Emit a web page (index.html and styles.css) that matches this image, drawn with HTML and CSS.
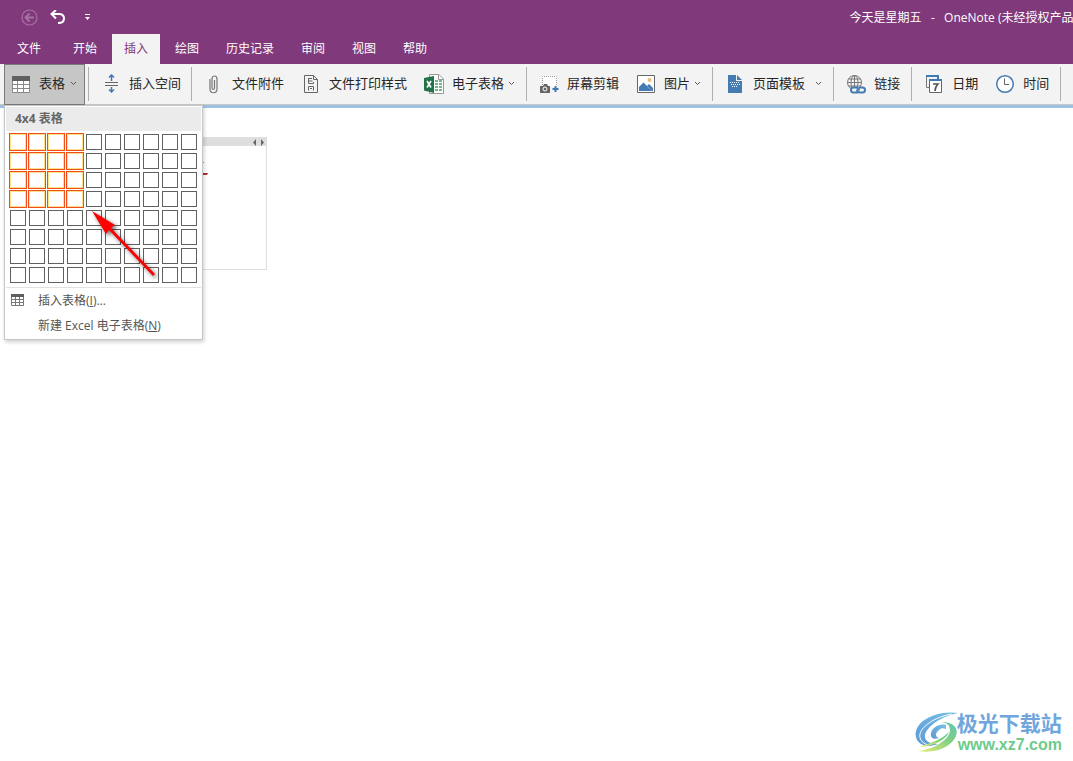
FILE: index.html
```html
<!DOCTYPE html>
<html lang="zh-CN">
<head>
<meta charset="utf-8">
<title>今天是星期五 - OneNote</title>
<link rel="stylesheet" href="styles.css">
</head>
<body>
<header>
  <div class="titlebar">
    <button class="quick" aria-label="后退"><svg width="17" height="17" viewBox="0 0 17 17" fill="none" stroke="#a872a3"><circle cx="8.500" cy="8.500" r="7.500" stroke-width="1.200"/><path d="M13 8.500H5M8.500 4.500l-4 4 4 4" stroke-width="1.800"/></svg></button>
    <button class="quick undo" aria-label="撤消"><svg width="16" height="15" viewBox="0 0 16 15" fill="none" stroke="#fff" stroke-width="2"><path d="M6 0 1.500 4 6 8.500M2 4h7c3 0 5 1.500 5 4.500S12 13 8 13"/></svg></button>
    <button class="quick more" aria-label="自定义快速访问工具栏"><svg width="7" height="7" viewBox="0 0 7 7" fill="#fff"><path d="M1 0h5v1H1zM1 3h5L3.500 6z"/></svg></button>
    <h1 class="title">今天是星期五&nbsp;&nbsp; -&nbsp;&nbsp; OneNote (未经授权产品)</h1>
  </div>
  <nav class="tabs">
    <button class="tab file">文件</button>
    <button class="tab">开始</button>
    <button class="tab active">插入</button>
    <button class="tab">绘图</button>
    <button class="tab">历史记录</button>
    <button class="tab">审阅</button>
    <button class="tab">视图</button>
    <button class="tab">帮助</button>
  </nav>
  <div class="toolbar">
    <button class="tool pressed">
      <svg width="18" height="17" viewBox="0 0 18 17"><path fill="#fff" d="M0 1h18v15H0z"/><path fill="#606060" d="M0 0h18v5H0z"/><path d="M.5 5v11.500h17V5M.5 8.500h17M.5 12.500h17M5.500 5v11M11.500 5v11" fill="none" stroke="#888"/></svg>
      表格
      <svg class="caret" width="7" height="5" viewBox="0 0 7 5"><path d="M1 1l2.500 2.500L6 1" fill="none" stroke="#555"/></svg>
    </button>
    <div class="group first">
      <button class="tool"><svg width="20" height="20" viewBox="0 0 20 20" fill="none"><path d="M4 8.500h13M4 11.500h13" stroke="#666"/><path d="M10.500 7V1M8 3.500 10.500 1 13 3.500M10.500 13v5M8 15.500l2.500 2.500 2.500-2.500" stroke="#3f79b5" stroke-width="1.500"/></svg>插入空间</button>
    </div>
    <div class="group">
      <button class="tool"><svg width="20" height="20" viewBox="0 0 20 20" fill="none" stroke="#777" stroke-width="1.200"><path d="M10.500 6v8c0 2-2.500 2-2.500 0V5c0-4 5-4 5 0v10c0 5-7 5-7 0V5"/></svg>文件附件</button>
      <button class="tool"><svg width="20" height="20" viewBox="0 0 20 20" fill="none" stroke="#666"><path d="M3.500 1.500h9l4 4v13h-13zM12.500 1.500v4h4"/><path d="M7.500 4v5.500h5V8M8 4.500h3M8 7h3.500M7.500 16.500v-4h5v4M9 14.500h2"/></svg>文件打印样式</button>
      <button class="tool"><svg width="20" height="20" viewBox="0 0 20 20"><path d="M5.500.5h9.500l4.500 4.500v14.500h-14z" fill="#fff" stroke="#999"/><path d="M14.500.5v5h5" fill="none" stroke="#999"/><path d="M11 6h3v2h-3zM15 6h3v2h-3zM11 9h3v2h-3zM15 9h3v2h-3zM11 12h3v2h-3zM15 12h3v2h-3zM11 15h3v2h-3zM15 15h3v2h-3z" fill="#75b38c"/><path d="M0 4l10-2v17L0 16.500z" fill="#1f7346"/><path d="M3 7l4 6.500M7 7l-4 6.500" stroke="#fff" stroke-width="1.600"/></svg>电子表格<svg class="caret" width="7" height="5" viewBox="0 0 7 5"><path d="M1 1l2.500 2.500L6 1" fill="none" stroke="#555"/></svg></button>
    </div>
    <div class="group">
      <button class="tool"><svg width="20" height="20" viewBox="0 0 20 20"><path d="M3 2h15v11H3z" fill="#fff"/><path d="M3.500 11V2.500h14V12" fill="none" stroke="#999" stroke-dasharray="1 1"/><path d="M1 12h3l1-2h3l1 2h2v7H1z" fill="#666"/><circle cx="6" cy="15" r="2" fill="#666" stroke="#fff"/><path d="M16.500 12v6M13.500 15h6" stroke="#3f79b5" stroke-width="2"/></svg>屏幕剪辑</button>
      <button class="tool"><svg width="20" height="20" viewBox="0 0 20 20"><path d="M1.500 1.500h17v17h-17z" fill="#fff" stroke="#666"/><circle cx="13.500" cy="6" r="2" fill="#eebc73"/><path d="M3 17v-4l4.500-4.500L16 17z" fill="#447bb3"/><path d="M11 12l2-2 4 4v3h-1z" fill="#447bb3"/></svg>图片<svg class="caret" width="7" height="5" viewBox="0 0 7 5"><path d="M1 1l2.500 2.500L6 1" fill="none" stroke="#555"/></svg></button>
    </div>
    <div class="group">
      <button class="tool"><svg width="20" height="20" viewBox="0 0 20 20"><path d="M3 1h8v6h6v12H3z" fill="#447bb3"/><path d="M12 1l5 5h-5z" fill="#447bb3"/><path d="M5 8.500h10M6 10.500h10M7 12.500h6" stroke="#fff" stroke-dasharray="1 1"/></svg>页面模板<svg class="caret wide" width="7" height="5" viewBox="0 0 7 5"><path d="M1 1l2.500 2.500L6 1" fill="none" stroke="#555"/></svg></button>
    </div>
    <div class="group">
      <button class="tool"><svg width="20" height="20" viewBox="0 0 20 20" fill="none"><g stroke="#777"><circle cx="8.500" cy="8.500" r="7"/><ellipse cx="8.500" cy="8.500" rx="3.500" ry="7"/><path d="M8.500 1.500v14M2.500 5h12M1.500 8.500h14M2.500 12h12"/></g><path d="M6 13h12v6H6z" fill="#f3f3f3"/><g stroke="#447bb3" stroke-width="2"><path d="M12 18.500H7.500a2.500 2.500 0 0 1 0-5H10q3 0 3 3"/><path d="M13 13.500h3.500a2.500 2.500 0 0 1 0 5H14q-3 0-3-3"/></g></svg>链接</button>
    </div>
    <div class="group">
      <button class="tool"><svg width="20" height="20" viewBox="0 0 20 20" fill="none"><path d="M5 13.500H2.500V3" stroke="#777"/><path d="M2 2h12v3" stroke="#3f79b5" stroke-width="2"/><path d="M5.500 6.500h12v12h-12z" stroke="#666" fill="#fff"/><path d="M5 6h13" stroke="#3f79b5" stroke-width="2"/><path d="M9 10h5q-3 3-3 7" stroke="#555" stroke-width="1.600"/></svg>日期</button>
      <button class="tool"><svg width="20" height="20" viewBox="0 0 20 20" fill="none"><circle cx="10" cy="10" r="8.300" fill="#fff" stroke="#447bb3" stroke-width="1.500"/><path d="M9.500 4.500v6h4.500" stroke="#666"/></svg>时间</button>
    </div>
  </div>
</header>
<main>
  <section class="note">
    <div class="note-bar"><svg width="11" height="7" viewBox="0 0 11 7" fill="#666"><path d="M3 0v7L0 3.500zM8 0v7l3-3.500z"/></svg></div>
    <svg class="ink" width="20" height="20" viewBox="0 0 20 20"><path d="M11 16h6l-1 2h-5z" fill="#a5302c"/><path d="M12 5h1v1h-1z" fill="#8a8ad0"/></svg>
  </section>
  <section class="popup">
    <h2 class="popup-title">4x4 表格</h2>
    <div class="cells" id="cells"></div>
    <button class="item"><svg width="13" height="12" viewBox="0 0 13 12"><path d="M.5.500h12v11H.5zM1 5.500h11M1 8.500h11M4.500 3v8M8.500 3v8" fill="none" stroke="#777"/><path d="M0 0h13v3H0z" fill="#606060"/></svg><span>插入表格(<u>I</u>)...</span></button>
    <button class="item"><svg width="13" height="12"></svg><span>新建 Excel 电子表格(<u>N</u>)</span></button>
  </section>
  <svg class="arrow" width="80" height="84" viewBox="0 0 80 84"><path d="M6 6 29 20l-4 3 44 46-2 2-44-46-3 4z" fill="#f00"/></svg>
</main>
<footer class="brand">
  <svg width="46" height="42" viewBox="2 4 46 42">
    <defs>
      <linearGradient id="sky" x1="0" y1="1" x2="1" y2="0"><stop offset="0" stop-color="#5f9bd6"/><stop offset="1" stop-color="#74bfe6"/></linearGradient>
      <linearGradient id="leaf" x1="0" y1="1" x2="1" y2="0"><stop offset="0" stop-color="#e9ea70"/><stop offset=".6" stop-color="#80cf85"/><stop offset="1" stop-color="#62c5b5"/></linearGradient>
    </defs>
    <path fill="url(#sky)" d="M46 5C34 3 20 6 11 13 2 20 1 31 9 36c5 3 12 2 17 0-8 0-14-3-13-9C15 18 30 8 46 5z"/>
    <path fill="none" stroke="#fff" d="M40 6C26 8 10 17 8 26c-1 5 2 9 8 11"/>
    <path fill="url(#sky)" d="M34 17c-7-2-14 3-15 8-1 5 3 7 8 5-4-1-4-5 0-8 2-2 4-2 7-1z"/>
    <path fill="url(#leaf)" d="M30 14c8 1 10 8 6 14-6 8-18 14-30 15 19 3 34-5 38-15 3-8-3-14-14-14z"/>
    <path fill="url(#leaf)" d="M37 24c-3 8-15 14-29 15 10-4 21-7 29-15z"/>
  </svg>
  <div class="brand-text"><strong>极光下载站</strong><span>www.xz7.com</span></div>
</footer>
<script src="cells.js"></script>
</body>
</html>
```
FILE: styles.css
```css
* { box-sizing: border-box; }
body {
  margin: 0;
  min-height: 100vh;
  position: relative;
  overflow: hidden;
  background: #fff;
  font-family: "Open Sans", "Noto Sans CJK SC", sans-serif;
  font-size: 12px;
}
button {
  border: 0;
  padding: 0;
  background: none;
  font: inherit;
  color: inherit;
  white-space: nowrap;
}
svg { display: block; flex: none; }
.titlebar {
  display: flex;
  align-items: center;
  height: 34px;
  padding-left: 21px;
  background: #80397b;
  color: #fff;
}
.undo { margin-left: 12px; }
.more { margin-left: 18px; }
.title {
  margin: 0 -4px 0 auto;
  font-size: 12px;
  font-weight: 400;
  white-space: nowrap;
}
.tabs {
  display: flex;
  gap: 3px;
  height: 30px;
  padding-left: 5px;
  background: #80397b;
  color: #fff;
}
.tab { padding: 0 12px 2px; }
.file { margin-right: 5px; }
.active { background: #f3f3f3; color: #80397b; }
.toolbar {
  display: flex;
  height: 44px;
  padding-left: 4px;
  background: #f3f3f3;
  border-bottom: 3px solid #9cc1e4;
  box-shadow: inset 0 -1px #c9c9c9;
  color: #262626;
  font-size: 13px;
}
.tool { display: flex; align-items: center; gap: 8px; padding-bottom: 4px; }
.tool svg { margin-top: 4px; }
.tool .caret { margin: 2px 0 0 -4px; }
.tool .wide { margin-left: 2px; }
.pressed {
  gap: 9px;
  padding: 0 7px 4px;
  border: 1px solid #7a7a7a;
  background: #c6c6c6;
}
.group {
  display: flex;
  gap: 17px;
  height: 34px;
  margin-top: 3px;
  padding: 0 11px 0 12px;
  border-right: 1px solid #b0b0b0;
}
.first { margin-left: 3px; padding-right: 10px; border-left: 1px solid #b0b0b0; }
main { position: relative; padding: 29px 0 0 20px; }
.note {
  width: 247px;
  height: 133px;
  border: 1px solid #dedede;
}
.note-bar {
  display: flex;
  align-items: center;
  justify-content: flex-end;
  height: 8px;
  padding-right: 2px;
  background: #dedede;
}
.ink { margin: 11px 0 0 170px; }
.popup {
  position: absolute;
  top: -3px;
  left: 4px;
  width: 199px;
  padding: 1px;
  border: 1px solid #c6c6c6;
  background: #fff;
  box-shadow: 1px 2px 4px #0003;
  color: #555;
}
.popup-title {
  margin: 0;
  padding-left: 9px;
  background: #ebebeb;
  color: #666;
  font-size: 12px;
  line-height: 24px;
}
.cells {
  display: grid;
  grid-template-columns: repeat(10, 16px);
  gap: 3px;
  padding: 3px 4px 4px;
  border-bottom: 1px solid #e1e1e1;
}
.cell { height: 16px; border: 1px solid #606060; background: #fff; }
.chosen { border-color: #ffe08a; box-shadow: 0 0 0 1px #ef4e1a; }
.item {
  display: flex;
  align-items: center;
  gap: 14px;
  width: 100%;
  height: 25px;
  padding: 0 0 2px 5px;
}
.arrow {
  position: absolute;
  top: 97px;
  left: 86px;
  filter: drop-shadow(2px 2px 2px #0009);
}
.brand {
  position: absolute;
  right: 11px;
  bottom: 6px;
  display: flex;
  align-items: center;
}
.brand-text { display: flex; flex-direction: column; margin-left: -3px; }
.brand-text strong { color: #70a6dd; font-size: 21px; line-height: 24px; }
.brand-text span {
  padding-left: 1px;
  color: #6dcb8c;
  font: 700 16px/20px "Liberation Sans", sans-serif;
}
```
FILE: cells.js
```js
const cells = document.getElementById("cells");
for (let row = 1; row <= 8; row++) {
  for (let col = 1; col <= 10; col++) {
    const cell = document.createElement("button");
    cell.className = row <= 4 && col <= 4 ? "cell chosen" : "cell";
    cell.setAttribute("aria-label", `${col}x${row}`);
    cells.append(cell);
  }
}
```
